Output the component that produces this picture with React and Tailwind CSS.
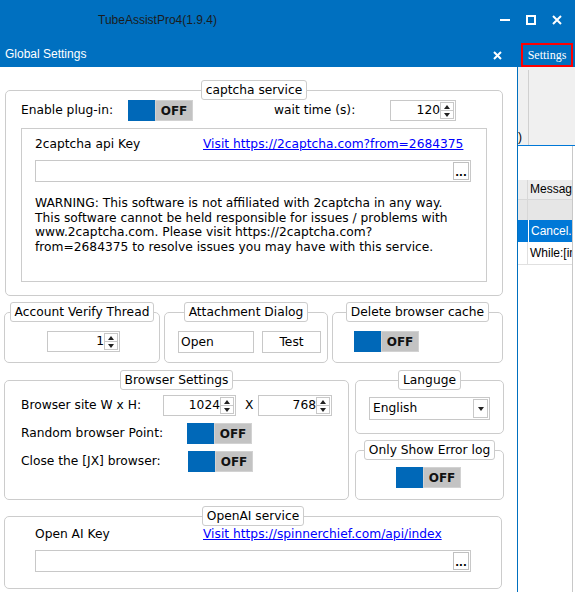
import React from "react";

const BLUE = "bg-[#0070c0]";

function Toggle() {
    return (
        <div className="flex h-[21px] w-[65px] shrink-0">
            <div className="w-[27px] bg-[#0068b8]" />
            <div className="flex flex-1 items-center justify-center border border-[#d2d2d2] bg-[#c3c3c3] text-[12px] font-bold text-[#111]">
                OFF
            </div>
        </div>
    );
}

function Spinner({ value, className }) {
    return (
        <div className={"flex h-[21px] shrink-0 border border-[#c8c8c8] bg-white " + className}>
            <div className="flex-1 text-right leading-[19px]">{value}</div>
            <div className="my-[1px] mr-[1px] flex w-[14px] flex-col border border-[#c8c8c8]">
                <div className="flex flex-1 items-center justify-center border-b border-[#c8c8c8]">
                    <svg width="6" height="4" viewBox="0 0 6 4"><path d="M3 0 L6 4 L0 4 Z" fill="#222" /></svg>
                </div>
                <div className="flex flex-1 items-center justify-center">
                    <svg width="6" height="4" viewBox="0 0 6 4"><path d="M0 0 L6 0 L3 4 Z" fill="#222" /></svg>
                </div>
            </div>
        </div>
    );
}

function KeyInput() {
    return (
        <div className="flex h-[22px] w-[436px] justify-end border border-[#c8c8c8] bg-white p-[1px]">
            <div className="flex w-[16px] items-end justify-center border border-[#c0c0c0] pb-[1px] text-[10px] leading-[10px] font-bold">...</div>
        </div>
    );
}

function Legend({ children }) {
    return (
        <legend className="mx-auto h-[20px] whitespace-nowrap rounded-[3px] border border-[#cccccc] bg-white px-[4px] leading-[18px]">
            {children}
        </legend>
    );
}

function Dialog() {
    return (
        <div className="flex w-[518px] shrink-0 flex-col border-r border-[#0070c0] bg-white text-[12.25px] text-black">
            {/* captcha service */}
            <fieldset className="mt-[13px] ml-[5px] h-[216px] w-[497px] rounded-[5px] border border-[#cccccc]">
                <Legend>captcha service</Legend>
                <div className="px-[15px]">
                    <div className="flex h-[21px] items-center">
                        <span className="w-[107px]">Enable plug-in:</span>
                        <Toggle />
                        <span className="ml-[81px] w-[116px]">wait time (s):</span>
                        <Spinner value="120" className="w-[66px]" />
                    </div>
                    <div className="mt-[7px] h-[154px] w-[466px] border border-[#cccccc] px-[13px] pt-[6px]">
                        <div className="flex h-[18px] items-center">
                            <span className="w-[168px]">2captcha api Key</span>
                            <span className="text-[#0000ff] underline">Visit https://2captcha.com?from=2684375</span>
                        </div>
                        <div className="mt-[7px]">
                            <KeyInput />
                        </div>
                        <p className="mt-[14px] leading-[14.5px]">
                            WARNING: This software is not affiliated with 2captcha in any way.
                            <br />
                            This software cannot be held responsible for issues / problems with
                            <br />
                            www.2captcha.com. Please visit https://2captcha.com?
                            <br />
                            from=2684375 to resolve issues you may have with this service.
                        </p>
                    </div>
                </div>
            </fieldset>

            {/* small groups */}
            <div className="mt-[6px] ml-[4px] flex gap-[4px]">
                <fieldset className="h-[61px] w-[156px] rounded-[5px] border border-[#cccccc]">
                    <Legend>Account Verify Thread</Legend>
                    <div className="mt-[9px] ml-[42px]">
                        <Spinner value="1" className="w-[73px]" />
                    </div>
                </fieldset>
                <fieldset className="h-[61px] w-[164px] rounded-[5px] border border-[#cccccc]">
                    <Legend>Attachment Dialog</Legend>
                    <div className="mt-[9px] flex gap-[8px] pl-[13px]">
                        <div className="h-[22px] w-[76px] border border-[#c8c8c8] pl-[2px] leading-[20px]">Open</div>
                        <div className="h-[22px] w-[59px] border border-[#c8c8c8] text-center leading-[20px]">Test</div>
                    </div>
                </fieldset>
                <fieldset className="h-[61px] w-[171px] rounded-[5px] border border-[#cccccc]">
                    <Legend>Delete browser cache</Legend>
                    <div className="mt-[9px] px-[21px]">
                        <Toggle />
                    </div>
                </fieldset>
            </div>

            {/* browser settings + language */}
            <div className="mt-[7px] ml-[4px] flex gap-[6px]">
                <fieldset className="h-[130px] w-[343px] rounded-[5px] border border-[#cccccc]">
                    <Legend>Browser Settings</Legend>
                    <div className="px-[16px]">
                        <div className="mt-[5px] flex h-[21px] items-center">
                            <span className="w-[142px]">Browser site W x H:</span>
                            <Spinner value="1024" className="w-[73px]" />
                            <span className="ml-[9px] w-[13px]">X</span>
                            <Spinner value="768" className="w-[74px]" />
                        </div>
                        <div className="mt-[7px] flex h-[21px] items-center">
                            <span className="w-[166px]">Random browser Point:</span>
                            <Toggle />
                        </div>
                        <div className="mt-[7px] flex h-[21px] items-center">
                            <span className="w-[167px]">Close the [JX] browser:</span>
                            <Toggle />
                        </div>
                    </div>
                </fieldset>
                <div className="flex w-[149px] flex-col">
                    <fieldset className="h-[64px] rounded-[5px] border border-[#cccccc]">
                        <Legend>Languge</Legend>
                        <div className="mx-[13px] mt-[7px] flex h-[23px] w-[121px] items-center border border-[#c8c8c8] p-[1px]">
                            <span className="flex-1 pl-[2px]">English</span>
                            <div className="flex h-full w-[15px] items-center justify-center border border-[#c8c8c8]">
                                <svg width="6" height="4" viewBox="0 0 6 4"><path d="M0 0 L6 0 L3 4 Z" fill="#222" /></svg>
                            </div>
                        </div>
                    </fieldset>
                    <fieldset className="mt-[6px] h-[60px] rounded-[5px] border border-[#cccccc]">
                        <Legend>Only Show Error log</Legend>
                        <div className="mt-[7px] px-[40px]">
                            <Toggle />
                        </div>
                    </fieldset>
                </div>
            </div>

            {/* OpenAI service */}
            <fieldset className="mt-[6px] ml-[4px] h-[83px] w-[498px] rounded-[5px] border border-[#cccccc]">
                <Legend>OpenAI service</Legend>
                <div className="px-[30px]">
                    <div className="flex h-[17px] items-center">
                        <span className="w-[168px]">Open AI Key</span>
                        <span className="text-[#0000ff] underline">Visit https://spinnerchief.com/api/index</span>
                    </div>
                    <div className="mt-[7px]">
                        <KeyInput />
                    </div>
                </div>
            </fieldset>
        </div>
    );
}

function BehindWindow() {
    return (
        <div className="flex flex-1 flex-col font-['Liberation_Sans',Arial,sans-serif] text-[12px]">
            <div className="flex h-[78px] bg-[#f0f0f0]">
                <div className="flex w-[10px] items-end pb-[1px] leading-[14px]">)</div>
                <div className="mt-[3px] w-[54px] border-l border-[#d0d0d0]" />
            </div>
            <div className="h-[1px] bg-[#0078d7]" />
            <div className="flex flex-1">
                <div className="flex w-[54px] flex-col">
                    <div className="h-[34px]" />
                    <div className="flex h-[20px] overflow-hidden whitespace-nowrap border-b border-[#d8d8d8] bg-[#ececec]">
                        <div className="w-[10px] shrink-0 border-r border-[#d8d8d8]" />
                        <span className="pl-[2px] leading-[19px]">Messag</span>
                    </div>
                    <div className="flex h-[20px] bg-[#e6e6e6]">
                        <div className="w-[10px] border-r border-[#d8d8d8]" />
                    </div>
                    <div className="flex h-[22px] overflow-hidden whitespace-nowrap bg-[#0078d7] text-white">
                        <div className="w-[10px] shrink-0" />
                        <span className="border-l border-white pl-[2px] leading-[22px]">Cancel.</span>
                    </div>
                    <div className="flex h-[23px] overflow-hidden whitespace-nowrap border-b border-[#e0e0e0]">
                        <div className="w-[10px] shrink-0 border-r border-[#e0e0e0]" />
                        <span className="pl-[2px] leading-[23px]">While:[in</span>
                    </div>
                </div>
                <div className="border-l border-[#c8c8c8]" />
            </div>
        </div>
    );
}

export default function App() {
    return (
        <div className="flex h-[592px] w-[575px] flex-col overflow-hidden bg-white font-['DejaVu_Sans',Verdana,sans-serif]">
            <div className={"flex h-[40px] shrink-0 items-center " + BLUE}>
                <span className="pl-[98px] font-['Liberation_Sans',Arial,sans-serif] text-[12px] text-[#1c1c1c]">TubeAssistPro4(1.9.4)</span>
                <div className="ml-auto flex items-center gap-[16px] pr-[13px]">
                    <svg width="10" height="10" viewBox="0 0 10 10"><path d="M0 5 H10" stroke="white" strokeWidth="2" /></svg>
                    <svg width="10" height="10" viewBox="0 0 10 10"><rect x="1" y="1" width="8" height="8" fill="none" stroke="white" strokeWidth="2" /></svg>
                    <svg width="10" height="10" viewBox="0 0 10 10"><path d="M1 1 L9 9 M9 1 L1 9" stroke="white" strokeWidth="2" /></svg>
                </div>
            </div>
            <div className={"flex h-[27px] shrink-0 " + BLUE}>
                <div className="flex w-[518px] items-center">
                    <span className="pl-[5px] font-['Liberation_Sans',Arial,sans-serif] text-[12px] text-white">Global Settings</span>
                    <svg className="mt-[3px] ml-auto mr-[16px]" width="9" height="9" viewBox="0 0 9 9">
                        <path d="M1 1 L8 8 M8 1 L1 8" stroke="white" strokeWidth="2" />
                    </svg>
                </div>
                <div className="mt-[3px] ml-[3px] flex h-[24px] w-[52px] items-center justify-center border-2 border-[#ff0000] font-['Liberation_Serif',serif] text-[12px] text-white">
                    Settings
                </div>
            </div>
            <div className="flex flex-1">
                <Dialog />
                <BehindWindow />
            </div>
        </div>
    );
}
